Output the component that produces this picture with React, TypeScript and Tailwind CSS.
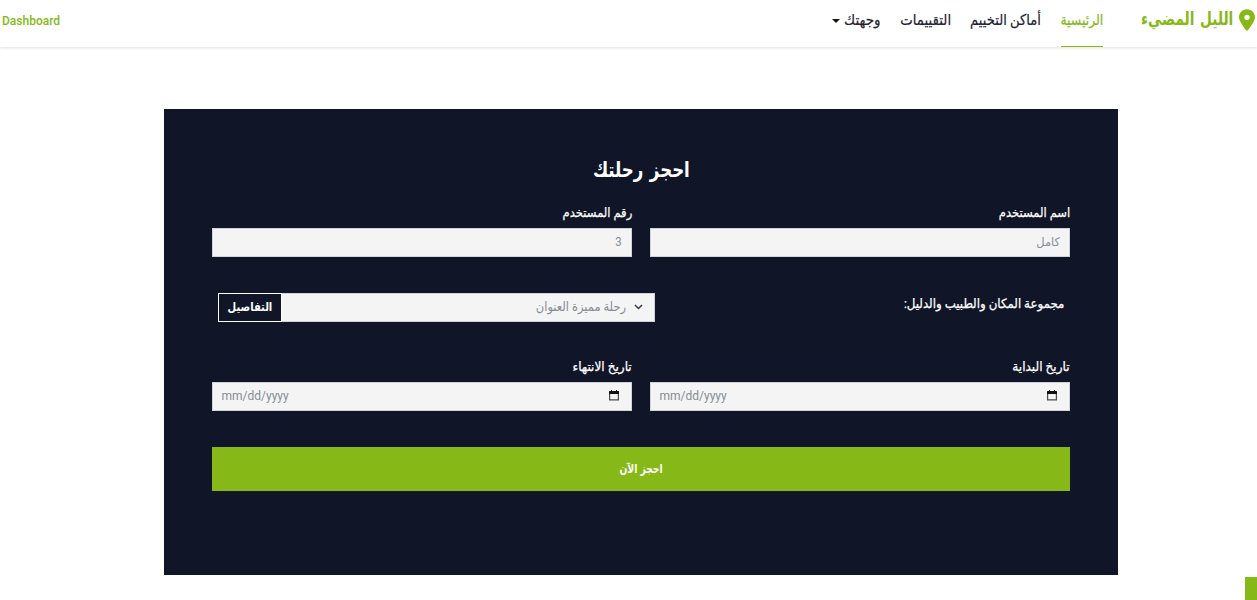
import React from "react";

const nav = "flex h-[47px] items-center justify-center pb-[6px] text-[15px] whitespace-nowrap [-webkit-text-stroke:0.2px]";

function Field({ label, value, date }: { label: string; value?: string; date?: boolean }) {
  return (
    <div className="flex w-[420px] flex-col">
      <label className="flex h-[22px] items-center text-[13px] text-white [-webkit-text-stroke:0.25px]">
        <span className={date ? "origin-right scale-x-[0.93]" : "origin-right scale-x-[0.89]"}>{label}</span>
      </label>
      <div
        className="mt-1 flex h-[29px] items-center border border-[#ced4da] bg-[#f4f4f4] pe-[8.500px] ps-[9.500px] pb-[2px] text-[12px] text-[#858e94]"
      >
        {date ? (
          <div className="flex w-full items-center justify-between">
            <CalendarIcon />
            <span dir="ltr">mm/dd/yyyy</span>
          </div>
        ) : (
          <span className="origin-right scale-x-95">{value}</span>
        )}
      </div>
    </div>
  );
}

function CalendarIcon() {
  return (
    <svg className="ms-[2.500px] h-[11px] w-[10px]" viewBox="0 0 10 11">
      <path d="M2 0h1v1h4V0h1v1h1.500l.5.5v2.500H0V1.500L.5 1H2z" fill="#111" />
      <path d="M.6 4v5.900h8.800V4" fill="none" stroke="#4a4a4a" strokeWidth="1.200" />
    </svg>
  );
}

export default function App() {
  return (
    <div dir="rtl" className="h-[600px] overflow-hidden bg-white font-[Roboto,'DejaVu_Sans',sans-serif]">
      <header className="flex h-[47px] items-start justify-between shadow-[0_1px_3px_rgba(0,0,0,0.12)]">
        <div className="flex">
          <div className="flex h-[40px] items-center gap-[6px] ps-[2px] text-[18px] font-bold text-[#86b817]">
            <svg className="h-[22px] w-[16px]" viewBox="0 0 384 512" fill="currentColor">
              <path d="M215.7 499.2C267 435 384 279.4 384 192 384 86 298 0 192 0S0 86 0 192c0 87.400 117 243 168.300 307.200 12.300 15.300 35.100 15.300 47.400 0zM192 128a64 64 0 1 1 0 128 64 64 0 1 1 0-128z" />
            </svg>
            <span className="w-[91px] pb-[3px] whitespace-nowrap">
              <span className="inline-block origin-right scale-x-[0.76] [word-spacing:3px]">الليل المضيء</span>
            </span>
          </div>
          <nav className="ms-[39px] flex gap-[19px] text-[#212130]">
            <a className={`${nav} w-[42px] border-b border-[#86b817] pb-[5px] text-[#86b817]`}>
              <span className="scale-x-[0.83]">الرئيسية</span>
            </a>
            <a className={`${nav} w-[72px]`}><span className="scale-x-[0.875]">أماكن التخييم</span></a>
            <a className={`${nav} w-[51px]`}><span className="scale-x-[0.89]">التقييمات</span></a>
            <a className={`${nav} gap-1`}>
              <span className="flex w-[37px] justify-center"><span className="scale-x-[0.9]">وجهتك</span></span>
              <svg className="h-1 w-2" viewBox="0 0 8 4"><path d="M0 0h8L4 4z" fill="#14141f" /></svg>
            </a>
          </nav>
        </div>
        <a className="flex h-[42px] items-center pe-[2px] text-[12px] font-medium text-[#86b817]">Dashboard</a>
      </header>
      <main className="ms-[139px] mt-[62px] h-[466px] w-[954px] bg-[#101527] px-12 pt-[46px]">
        <h1 className="flex h-[30px] items-center justify-center pt-[2px] text-[21px] font-bold text-white">
          <span className="scale-x-[0.79] [word-spacing:3px]">احجز رحلتك</span>
        </h1>
        <div className="mt-[17px] flex justify-between">
          <Field label="اسم المستخدم" value="كامل" />
          <Field label="رقم المستخدم" value="3" />
        </div>
        <div className="mt-9 flex h-[29px] justify-between px-[6px] text-[13px]">
          <span className="flex h-[22px] items-center text-white [-webkit-text-stroke:0.25px]">
            <span className="origin-right scale-x-[0.91]">مجموعة المكان والطبيب والدليل:</span>
          </span>
          <div className="flex">
            <div className="flex w-[374px] items-center gap-2 border border-[#ced4da] bg-[#f4f4f4] ps-[11px] pb-px text-[#858e94]">
              <svg className="h-[6px] w-[9px]" viewBox="0 0 9 6"><path d="M1 1l3.500 3.500L8 1" fill="none" stroke="#343a40" strokeWidth="1.500" /></svg>
              <span className="origin-right scale-x-[0.885]">رحلة مميزة العنوان</span>
            </div>
            <button className="-ms-px flex w-[64px] items-center justify-center border border-white bg-[#101527] pb-px text-[12px] font-bold text-white">
              <span className="scale-x-[0.83]">التفاصيل</span>
            </button>
          </div>
        </div>
        <div className="mt-[34px] flex justify-between">
          <Field label="تاريخ البداية" date />
          <Field label="تاريخ الانتهاء" date />
        </div>
        <button className="mt-9 flex h-[44px] w-full items-center justify-center bg-[#86b817] text-[12px] font-bold text-white">
          <span className="scale-x-[0.77] [word-spacing:1px]">احجز الآن</span>
        </button>
      </main>
      <div className="fixed right-0 bottom-0 h-[23px] w-3 bg-[#86b817]" />
    </div>
  );
}
